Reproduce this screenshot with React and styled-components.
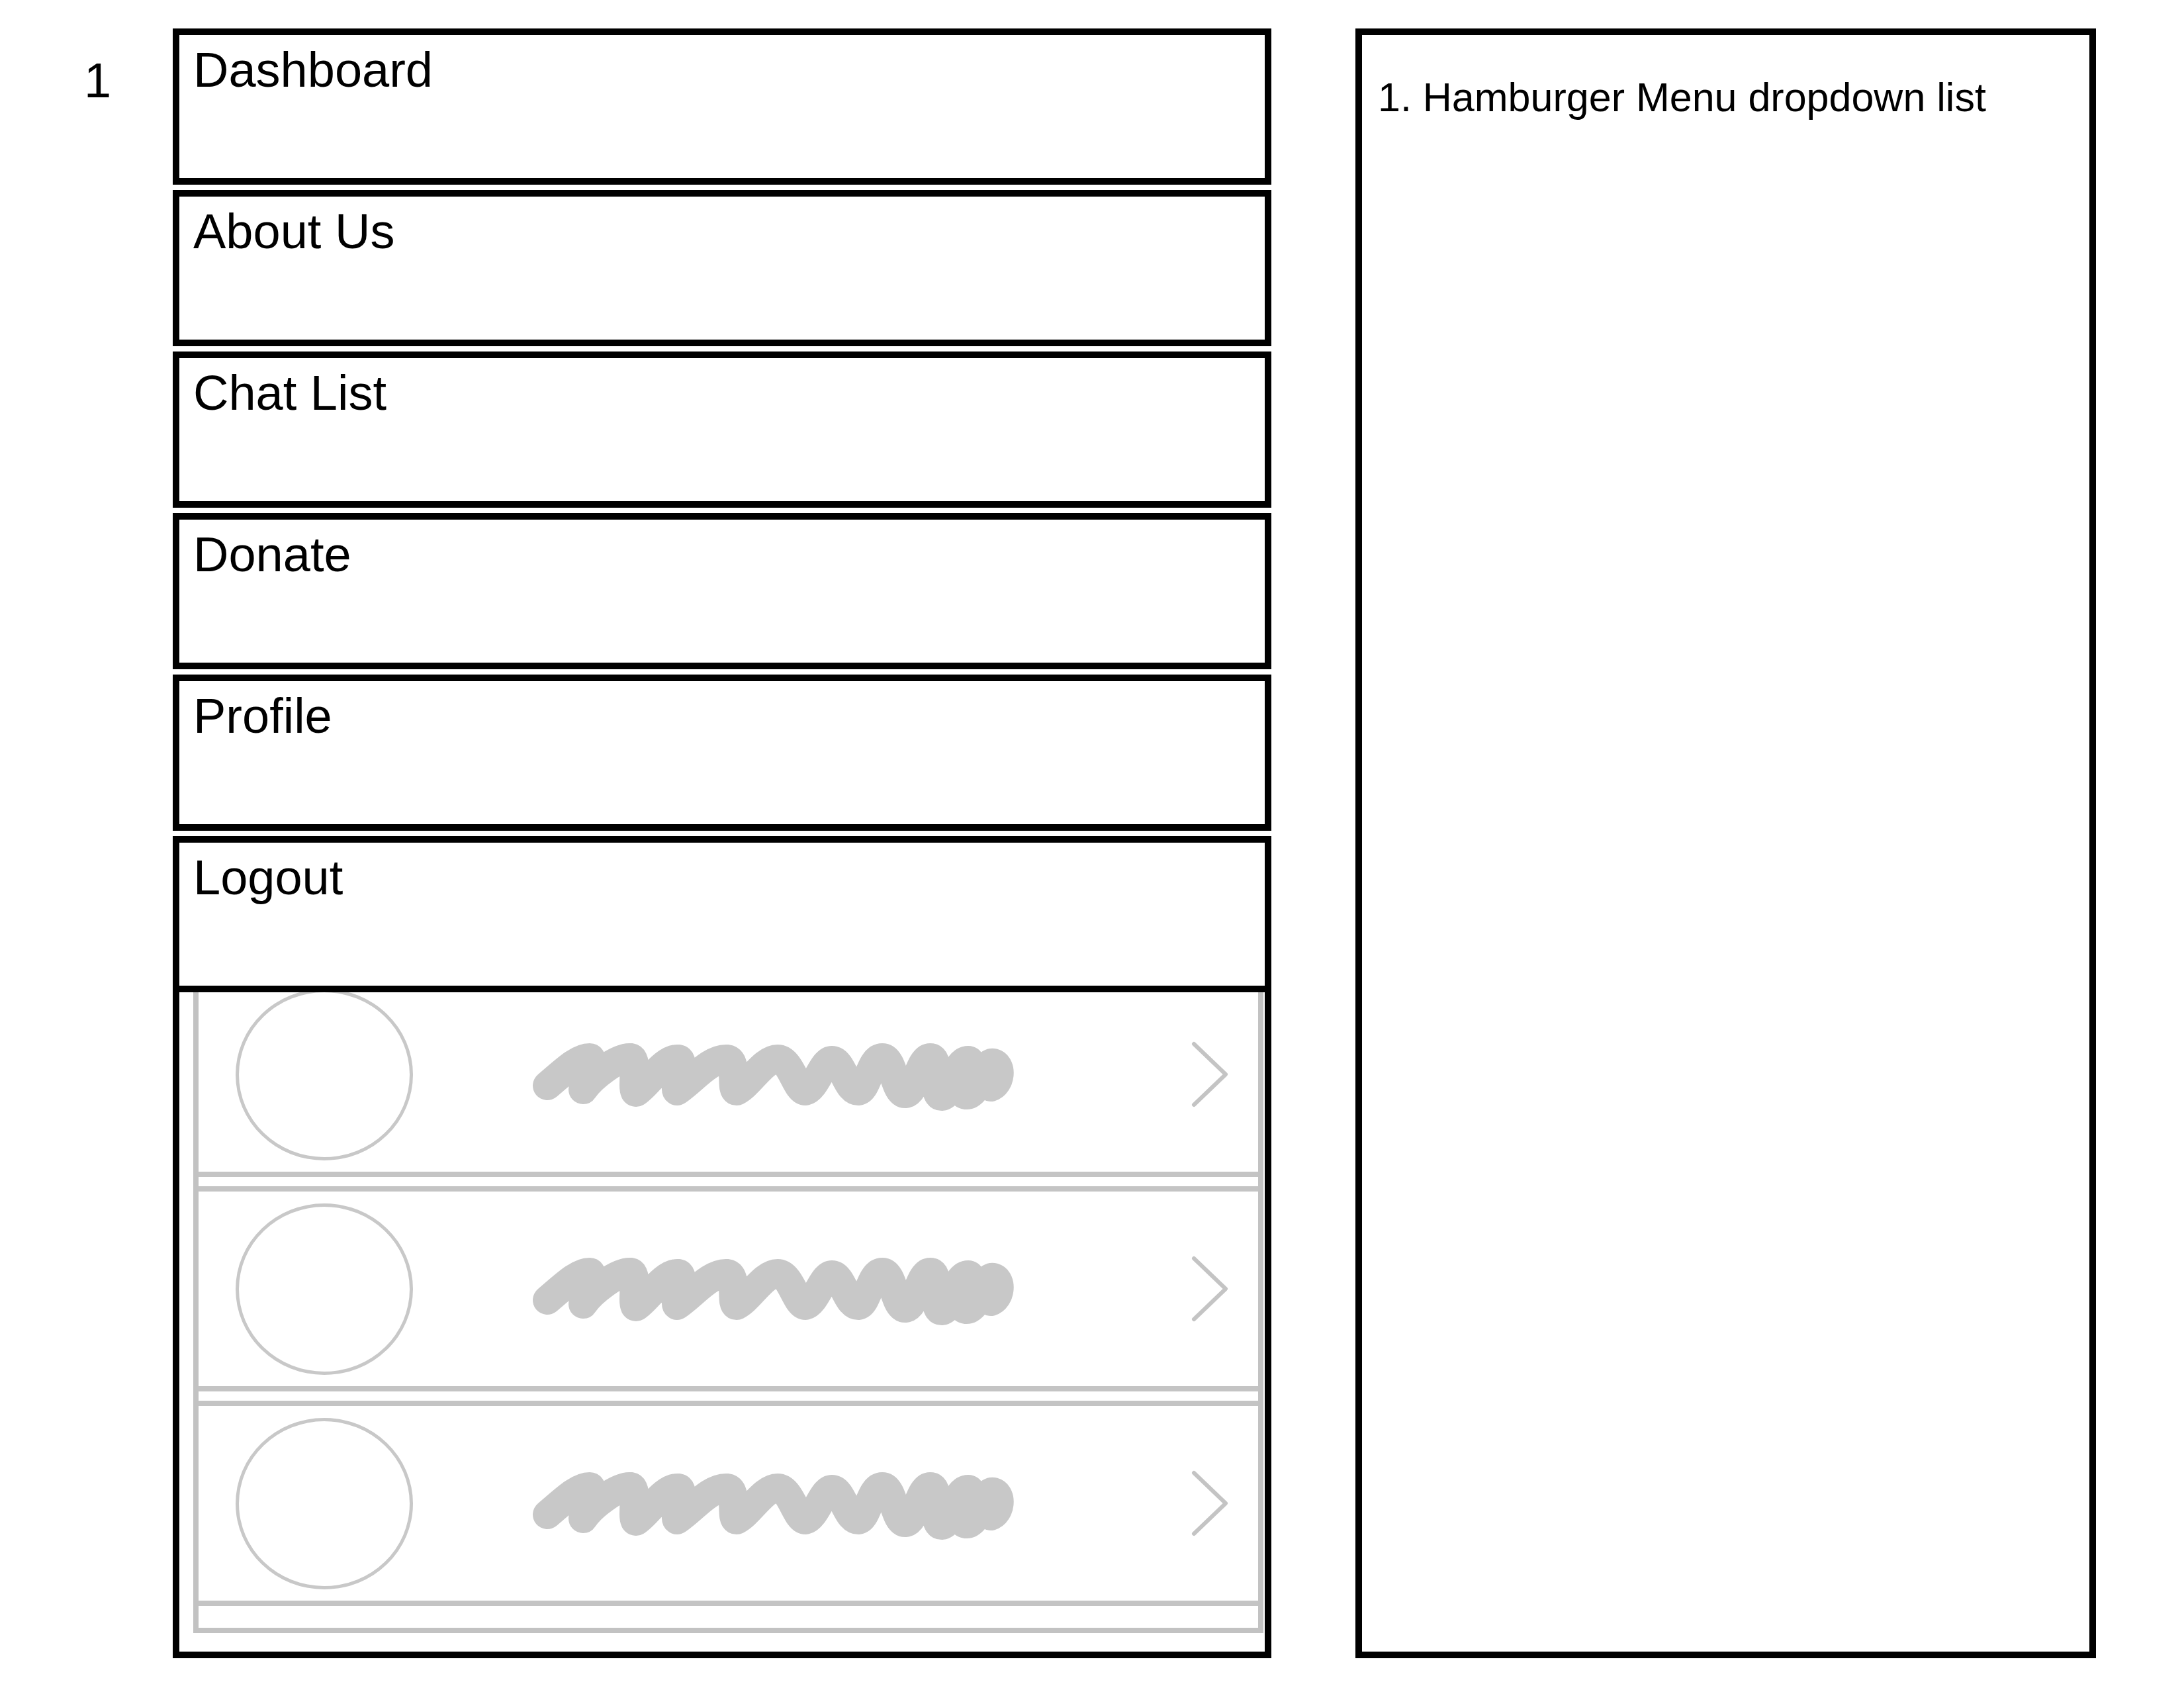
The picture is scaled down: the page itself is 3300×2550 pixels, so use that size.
import styled, { createGlobalStyle } from "styled-components";

const GlobalStyle = createGlobalStyle`
  html, body {
    margin: 0;
    padding: 0;
    background: #fff;
  }
  body {
    font-family: "Liberation Sans", Arial, sans-serif;
    color: #000;
  }
`;

const Page = styled.div`
  display: flex;
  align-items: flex-start;
  width: 3300px;
  height: 2550px;
  padding-top: 43px;
  box-sizing: border-box;
`;

const Number = styled.div`
  width: 261px;
  flex-shrink: 0;
  box-sizing: border-box;
  padding: 42px 0 0 127px;
  font-size: 74px;
  line-height: 1;
`;

const Phone = styled.div`
  position: relative;
  width: 1660px;
  height: 2462px;
  flex-shrink: 0;
  box-sizing: border-box;
  border: 10px solid #000;
  background: #fff;
  display: flex;
  flex-direction: column;
`;

const ChatList = styled.div`
  flex: 1;
  margin: 0 2px 28px 21px;
  border: 8px solid #c2c2c2;
  border-top: none;
  padding-bottom: 33px;
  display: flex;
  flex-direction: column;
  justify-content: flex-end;
  gap: 14px;
  overflow: hidden;
`;

const ChatRow = styled.div`
  height: 310px;
  flex-shrink: 0;
  box-sizing: border-box;
  border-top: 8px solid #c4c4c4;
  border-bottom: 8px solid #c4c4c4;
  display: flex;
  align-items: center;
  padding: 0 43px 0 56px;
`;

const Avatar = styled.div`
  width: 268px;
  height: 259px;
  flex-shrink: 0;
  box-sizing: border-box;
  border: 5px solid #c8c8c8;
  border-radius: 50%;
`;

const Scribble = styled.svg`
  margin-left: 179px;
  flex-shrink: 0;
  overflow: visible;
`;

const Chevron = styled.svg`
  margin-left: auto;
  flex-shrink: 0;
`;

const Dropdown = styled.div`
  position: absolute;
  top: -10px;
  left: -10px;
  right: -10px;
  display: flex;
  flex-direction: column;
  gap: 8px;
  background: #fff;
`;

const MenuItem = styled.div`
  height: 236px;
  box-sizing: border-box;
  border: 10px solid #000;
  background: #fff;
  padding: 16px 0 0 21px;
  font-size: 74px;
  line-height: 1;
`;

const Notes = styled.div`
  margin-left: 127px;
  width: 1119px;
  height: 2462px;
  flex-shrink: 0;
  box-sizing: border-box;
  border: 10px solid #000;
  padding: 64px 0 0 24px;
`;

const NoteText = styled.div`
  font-size: 61px;
  line-height: 1;
  white-space: nowrap;
`;

const menu = ["Dashboard", "About Us", "Chat List", "Donate", "Profile", "Logout"];

// hand-drawn placeholder text squiggle
const scribblePath =
  "M24 72 C50 50 70 30 88 30 C96 30 78 70 78 78 C90 60 130 28 150 30 C162 32 150 80 158 82 C175 72 200 30 222 32 C234 34 214 76 220 80 C244 64 270 30 296 32 C312 34 300 80 310 80 C330 70 350 32 372 32 C392 32 400 80 414 80 C430 76 440 34 454 34 C470 34 476 80 494 80 C508 78 512 30 530 30 C548 30 548 86 566 84 C582 80 586 28 604 30 C618 32 604 88 620 88 C636 86 640 34 660 34 C672 34 640 84 656 86 C676 88 684 34 698 38 C712 42 708 70 694 74";

function Row() {
  return (
    <ChatRow>
      <Avatar />
      <Scribble width="732" height="110" viewBox="0 0 732 110">
        <path
          d={scribblePath}
          fill="none"
          stroke="#c8c8c8"
          strokeWidth="44"
          strokeLinecap="round"
          strokeLinejoin="round"
        />
      </Scribble>
      <Chevron width="60" height="100" viewBox="0 0 60 100">
        <polyline
          points="6,4 54,50 6,96"
          fill="none"
          stroke="#c4c4c4"
          strokeWidth="6"
          strokeLinecap="round"
          strokeLinejoin="round"
        />
      </Chevron>
    </ChatRow>
  );
}

export default function App() {
  return (
    <>
      <GlobalStyle />
      <Page>
        <Number>1</Number>
        <Phone>
          <ChatList>
            {[0, 1, 2, 3, 4, 5, 6, 7].map((i) => (
              <Row key={i} />
            ))}
          </ChatList>
          <Dropdown>
            {menu.map((label) => (
              <MenuItem key={label}>{label}</MenuItem>
            ))}
          </Dropdown>
        </Phone>
        <Notes>
          <NoteText>1. Hamburger Menu dropdown list</NoteText>
        </Notes>
      </Page>
    </>
  );
}
